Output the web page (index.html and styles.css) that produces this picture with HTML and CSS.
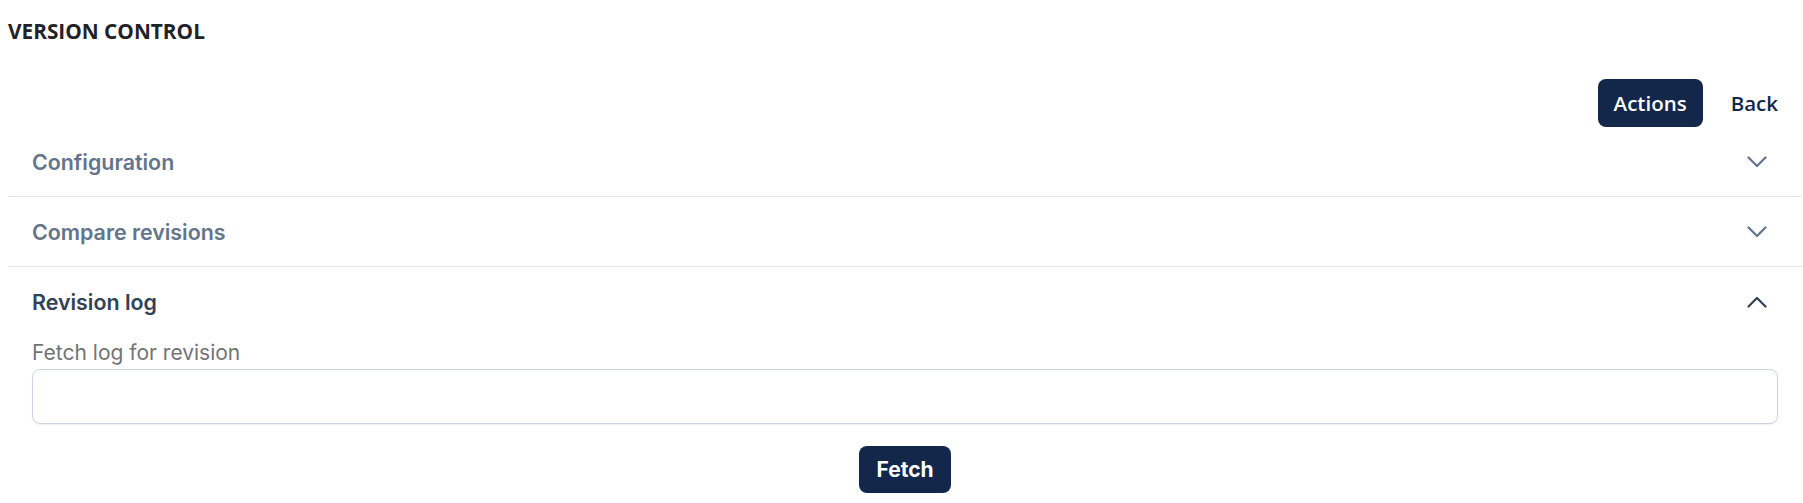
FILE: index.html
```html
<!DOCTYPE html>
<html lang="en">
<head>
<meta charset="utf-8">
<title>Version control</title>
<link rel="stylesheet" href="styles.css">
</head>
<body>
<div class="page">
  <h1 class="title">VERSION CONTROL</h1>
  <div class="toolbar">
    <button class="btn btn-primary">Actions</button>
    <button class="btn btn-link">Back</button>
  </div>
  <div class="accordion">
    <div class="acc-item">
      <div class="acc-header">
        <span class="acc-title">Configuration</span>
        <svg class="chev" width="20" height="12" viewBox="0 0 20 12"><polyline points="1.5,1.5 10,10 18.5,1.5" fill="none" stroke="currentColor" stroke-width="2.2" stroke-linecap="round" stroke-linejoin="round"/></svg>
      </div>
    </div>
    <div class="acc-item">
      <div class="acc-header">
        <span class="acc-title">Compare revisions</span>
        <svg class="chev" width="20" height="12" viewBox="0 0 20 12"><polyline points="1.5,1.5 10,10 18.5,1.5" fill="none" stroke="currentColor" stroke-width="2.2" stroke-linecap="round" stroke-linejoin="round"/></svg>
      </div>
    </div>
    <div class="acc-item open">
      <div class="acc-header">
        <span class="acc-title">Revision log</span>
        <svg class="chev" width="20" height="12" viewBox="0 0 20 12"><polyline points="1.5,10.5 10,2 18.5,10.5" fill="none" stroke="currentColor" stroke-width="2.2" stroke-linecap="round" stroke-linejoin="round"/></svg>
      </div>
      <div class="acc-body">
        <label class="field-label" for="rev">Fetch log for revision</label>
        <input id="rev" class="field-input" type="text">
        <div class="actions">
          <button class="btn btn-primary btn-fetch">Fetch</button>
        </div>
      </div>
    </div>
  </div>
</div>
</body>
</html>
```
FILE: styles.css
```css
html, body {
  margin: 0;
  padding: 0;
  background: #ffffff;
}
.page {
  padding: 0 1px 0 8px;
}
.title {
  margin: 0;
  padding-top: 18px;
  font-family: "Open Sans", "Liberation Sans", sans-serif;
  font-weight: 700;
  font-size: 20.8px;
  line-height: 26px;
  color: #1f2328;
}
.toolbar {
  display: flex;
  justify-content: flex-end;
  gap: 12px;
  margin-top: 35px;
  padding-right: 8px;
}
.btn {
  border: none;
  cursor: pointer;
  font-family: "Open Sans", "Liberation Sans", sans-serif;
  font-size: 20.5px;
  font-weight: 600;
  height: 48px;
  padding: 0 16px;
  border-radius: 8px;
}
.btn-primary {
  background: #13274a;
  color: #ffffff;
}
.btn-link {
  background: transparent;
  color: #13274a;
}
.acc-item {
  border-bottom: 1px solid #e2e8f0;
}
.acc-item.open {
  border-bottom: none;
}
.acc-header {
  display: flex;
  align-items: center;
  justify-content: space-between;
  height: 69px;
  padding: 0 35px 0 24px;
}
.acc-title {
  font-family: Inter, "Noto Sans", sans-serif;
  font-weight: 600;
  font-size: 21.4px;
  color: #64748b;
}
.chev {
  color: #64748b;
}
.open .acc-title, .open .chev {
  color: #334155;
}
.acc-body {
  padding: 5px 24px 0 24px;
  display: flex;
  flex-direction: column;
}
.field-label {
  font-family: Inter, "Noto Sans", sans-serif;
  font-size: 21px;
  line-height: 24px;
  color: #737373;
}
.field-input {
  margin-top: 4px;
  height: 55px;
  box-sizing: border-box;
  border: 1px solid #cdd5e3;
  border-radius: 8px;
  box-shadow: 0 1px 2px rgba(15, 23, 42, 0.06);
  font-family: Inter, sans-serif;
  font-size: 18px;
  padding: 0 12px;
  outline: none;
}
.actions {
  display: flex;
  justify-content: center;
  margin-top: 22px;
}
.btn-fetch {
  font-family: Inter, "Noto Sans", sans-serif;
  font-weight: 700;
  font-size: 21px;
  height: 47px;
  padding: 0 17px;
}
```
